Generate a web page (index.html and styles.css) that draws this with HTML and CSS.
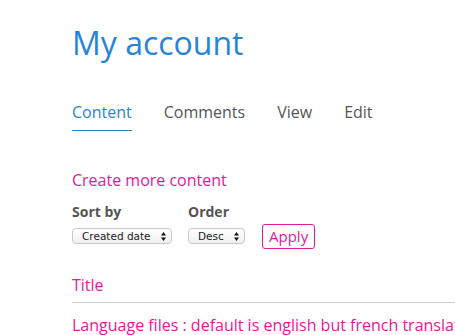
FILE: index.html
```html
<!DOCTYPE html>
<html lang="en">
<head>
  <meta charset="UTF-8">
  <title>My account</title>
  <link rel="stylesheet" href="styles.css">
</head>
<body>
<div class="page">
  <h1 class="page-title">My account</h1>

  <nav class="tabs">
    <a class="tab active">Content</a>
    <a class="tab">Comments</a>
    <a class="tab">View</a>
    <a class="tab">Edit</a>
  </nav>

  <a class="create-link">Create more content</a>

  <form class="filters">
    <div class="filter">
      <label>Sort by</label>
      <div class="fake-select sort">
        <span>Created date</span>
        <svg class="arrows" width="5" height="9" viewBox="0 0 5 9"><path d="M2.5 0 L5 3.5 L0 3.5 Z M0 5.5 L5 5.5 L2.5 9 Z" fill="#111"/></svg>
      </div>
    </div>
    <div class="filter">
      <label>Order</label>
      <div class="fake-select order">
        <span>Desc</span>
        <svg class="arrows" width="5" height="9" viewBox="0 0 5 9"><path d="M2.5 0 L5 3.5 L0 3.5 Z M0 5.5 L5 5.5 L2.5 9 Z" fill="#111"/></svg>
      </div>
    </div>
    <button type="button" class="btn-apply">Apply</button>
  </form>

  <div class="list-head">Title</div>
  <div class="list-row">Language files : default is english but french translation available</div>
</div>
</body>
</html>
```

FILE: styles.css
```css
body {
  margin: 0;
  font-family: 'Open Sans', sans-serif;
  background: #fff;
  color: #555;
  overflow: hidden;
}
.page {
  padding: 20px 0 0 72px;
}
.page-title {
  margin: 0;
  font-size: 32px;
  font-weight: 400;
  color: #2a84d6;
  line-height: 46px;
}
.tabs {
  display: flex;
  gap: 32px;
  margin-top: 35px;
}
.tab {
  font-size: 16px;
  color: #555;
  line-height: 22px;
  padding-bottom: 7px;
  cursor: pointer;
}
.tab.active {
  color: #2a84d6;
  border-bottom: 1px solid #2a84d6;
}
.create-link {
  display: block;
  margin-top: 38px;
  font-size: 16px;
  line-height: 22px;
  color: #e5189a;
}
.filters {
  display: flex;
  align-items: flex-end;
  gap: 16px;
  margin-top: 11px;
}
.filter label {
  display: block;
  font-size: 14px;
  font-weight: 700;
  color: #555;
  line-height: 19px;
  margin-bottom: 7px;
}
.fake-select {
  box-sizing: border-box;
  display: flex;
  align-items: center;
  justify-content: space-between;
  height: 16px;
  padding: 0 5px 0 9px;
  border: 1px solid #c8c8c8;
  border-radius: 4px;
  background: linear-gradient(to bottom, #fff, #f0f0f0);
  font-family: 'DejaVu Sans', sans-serif;
  font-size: 10.5px;
  color: #222;
  margin-bottom: 5px;
}
.fake-select.sort {
  width: 100px;
}
.fake-select.order {
  width: 57px;
}
.arrows {
  display: block;
  flex: none;
}
.btn-apply {
  font-family: 'Open Sans', sans-serif;
  font-size: 15px;
  color: #e5189a;
  background: #fff;
  border: 1px solid #e5189a;
  border-radius: 3px;
  padding: 0 6px;
  height: 25px;
  line-height: 21px;
  margin-left: 1px;
  margin-bottom: 0;
}
.list-head {
  margin-top: 25px;
  font-size: 16px;
  line-height: 22px;
  color: #e5189a;
  padding-bottom: 6px;
  border-bottom: 1px solid #ccc;
}
.list-row {
  margin-top: 11px;
  font-size: 16px;
  line-height: 22px;
  color: #e5189a;
  white-space: nowrap;
}
```
